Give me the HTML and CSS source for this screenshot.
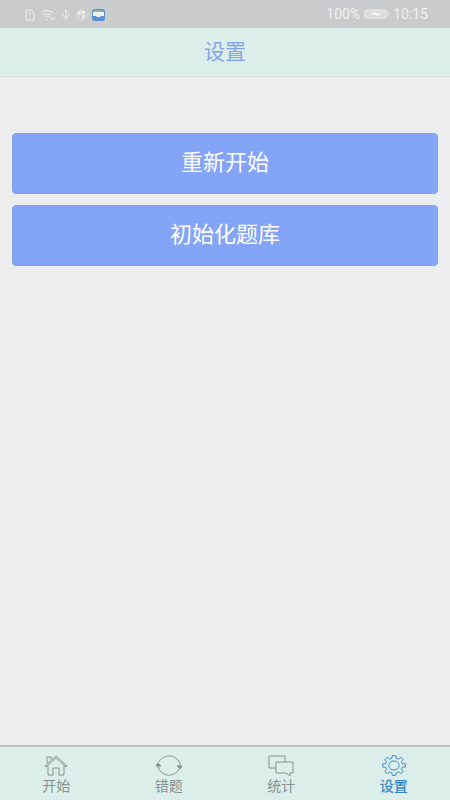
FILE: index.html
```html
<!DOCTYPE html>
<html lang="zh-CN">
<head>
<meta charset="utf-8">
<meta name="viewport" content="width=device-width, initial-scale=1">
<title>设置</title>
<link rel="stylesheet" href="styles.css">
</head>
<body>
<div class="status">
  <div class="status-group icons">
    <svg class="glyph" viewBox="0 0 12 12"><path d="M2 1h6l2 3v7H2zM6 3v4M6 8v1"/></svg>
    <svg class="glyph wide" viewBox="0 0 16 12"><path d="M1 4q6-5 12 0M3 6q4-3 8 0M5 8q2-2 4 0M7 10v1M11 8v3M14 8v3"/></svg>
    <svg class="glyph" viewBox="0 0 12 12"><path d="M6 11V1M5 3l1-2 1 2M3 4v3l3 2 3-2V4"/></svg>
    <svg class="glyph globe" viewBox="0 0 12 12"><circle cx="6" cy="6" r="5" opacity=".6"/><path d="M3 2l2 1-1 3-2-1zM6 2l3 1-1 2-2-1zM6 6l3 1-2 3z" fill="#ededed"/></svg>
    <svg class="app" viewBox="0 0 13 12"><rect width="13" height="12" rx="3" fill="#5b8fd0"/><path d="M1 3h11v4H9L8 8H5L4 7H1z" fill="#edf3ea"/><path d="M2 2h9" stroke="#b9d3a8"/></svg>
  </div>
  <div class="status-group">
    <span>100%</span>
    <svg class="battery" viewBox="0 0 25 12"><rect x="1" y="2" width="21" height="8" rx="1" fill="#dadada" stroke="#ececec"/><path d="M23 4h1v4h-1" fill="none" stroke="#ececec"/><path d="M5 6l7-2v1l7 1-7 2V7z" fill="#f8f8f8"/></svg>
    <span>10:15</span>
  </div>
</div>
<header class="header"><h1>设置</h1></header>
<main class="content">
  <button class="action" type="button">重新开始</button>
  <button class="action" type="button">初始化题库</button>
</main>
<nav class="tabs">
  <a class="tab" href="#start">
    <svg viewBox="0 0 24 21"><path d="M1 11L12 1l11 10-1 1L12 3 2 12zM4 11v9h5v-7h6v7h5v-9M3 8V2h4v3"/></svg>
    <span>开始</span>
  </a>
  <a class="tab" href="#wrong">
    <svg class="cycle" viewBox="0 0 28 21"><path d="M4 7C8-1 21-2 25 9V12M24 14C20 22 7 23 3 12V9"/><path d="M1 11l2-3 3 3zM22 11h5l-2 3z" fill="currentColor"/></svg>
    <span>错题</span>
  </a>
  <a class="tab" href="#stats">
    <svg class="chat" viewBox="0 0 26 21"><path d="M8 13H1V1h16v6M8 7h17v11h-3v3l-4-3H8z"/></svg>
    <span>统计</span>
  </a>
  <a class="tab active" href="#settings" aria-current="page">
    <svg viewBox="0 0 24 24" preserveAspectRatio="none"><g transform="translate(12 12)"><path d="M-1.8-11.3H1.8L2.1-8.3 4.4-7.3 6.8-9.3 9.3-6.8 7.3-4.4 8.3-2.1 11.3-1.8V1.8L8.3 2.1 7.3 4.4 9.3 6.8 6.8 9.3 4.4 7.3 2.1 8.3 1.8 11.3H-1.8L-2.1 8.3-4.4 7.3-6.8 9.3-9.3 6.8-7.3 4.4-8.3 2.1-11.3 1.8V-1.8L-8.3-2.1-7.3-4.4-9.3-6.8-6.8-9.3-4.4-7.3-2.1-8.3z"/><circle r="5.2"/></g></svg>
    <span>设置</span>
  </a>
</nav>
</body>
</html>
```
FILE: styles.css
```css
* { box-sizing: border-box; }

body {
  display: flex;
  flex-direction: column;
  min-height: 100vh;
  margin: 0;
  background: #ebedef;
  font-family: Roboto, "Noto Sans CJK SC", sans-serif;
}

.status {
  display: flex;
  align-items: center;
  justify-content: space-between;
  height: 28px;
  padding: 0 22px 0 24px;
  background: #cacbcc;
  color: #f0f0f0;
  font-size: 14px;
}

.status-group {
  display: flex;
  align-items: center;
  gap: 4px;
}

.icons { padding-top: 2px; }

.glyph {
  width: 12px;
  height: 12px;
  fill: none;
  stroke: #ededed;
}

.glyph.wide { width: 16px; }
.app { width: 13px; height: 12px; }
.battery { width: 25px; height: 12px; }

.header {
  display: flex;
  align-items: center;
  justify-content: center;
  height: 49px;
  border-bottom: 1px solid #d3dcdb;
  background: #dbeeea;
}

h1 {
  margin: 0;
  color: #86a5e8;
  font-size: 21px;
  font-weight: 400;
  line-height: 28px;
}

.content {
  display: flex;
  flex: 1;
  flex-direction: column;
  gap: 11px;
  padding: 56px 12px;
}

.action {
  width: 100%;
  padding: 13px 14px 15px;
  border: 1px solid #86a0e4;
  border-radius: 4px;
  background: #84a4f7;
  color: #fff;
  font-family: inherit;
  font-size: 22px;
  line-height: 31px;
}

.tabs {
  display: grid;
  grid-template-columns: repeat(4, 1fr);
  padding: 8px 0 4px;
  border-top: 2px solid #bcc4c3;
  background: #dbeeea;
}

.tab {
  display: flex;
  flex-direction: column;
  align-items: center;
  color: #85928f;
  font-size: 14px;
  line-height: 20px;
  text-decoration: none;
}

.tab svg {
  width: 24px;
  height: 21px;
  fill: none;
  stroke: currentColor;
}

.tab .cycle { width: 28px; }
.tab .chat { width: 26px; }

.tab.active { color: #3888c8; }
.tab.active span { font-weight: 500; }
```
